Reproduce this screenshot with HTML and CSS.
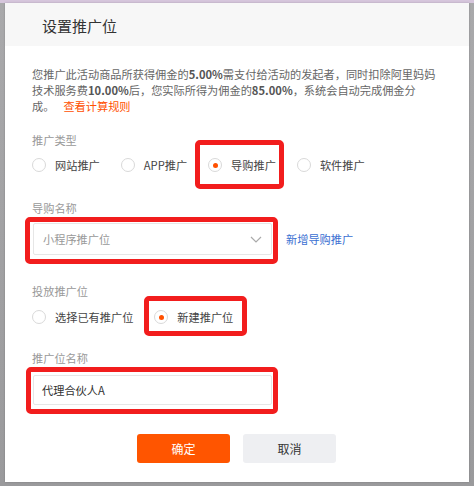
FILE: index.html
```
<!DOCTYPE html>
<html>
<head>
    <meta charset="utf-8">
    <meta name="viewport" content="width=device-width, initial-scale=1">
    <title>设置推广位</title>
    <link rel="stylesheet" href="styles.css">
</head>
<body>
    <div class="modal">
        <div class="modal-head">设置推广位</div>
        <div class="modal-body">
            <p class="notice">您推广此活动商品所获得佣金的<b>5.00%</b>需支付给活动的发起者，同时扣除阿里妈妈<br>技术服务费<b>10.00%</b>后，您实际所得为佣金的<b>85.00%</b>，系统会自动完成佣金分<br>成。<a class="rule">查看计算规则</a></p>

            <div class="field f-type">
                <div class="label">推广类型</div>
                <div class="radios">
                    <span class="radio"><i></i>网站推广</span>
                    <span class="radio"><i></i>APP推广</span>
                    <span class="radio on mark mark-type"><i></i>导购推广</span>
                    <span class="radio"><i></i>软件推广</span>
                </div>
            </div>

            <div class="field f-name">
                <div class="label">导购名称</div>
                <div class="row">
                    <div class="select mark mark-select">
                        <span>小程序推广位</span>
                        <svg width="12" height="7" viewBox="0 0 12 7"><path d="M1 1l5 5 5-5" fill="none" stroke="#aaa" stroke-width="1.2"/></svg>
                    </div>
                    <a class="add">新增导购推广</a>
                </div>
            </div>

            <div class="field f-place">
                <div class="label">投放推广位</div>
                <div class="radios">
                    <span class="radio"><i></i>选择已有推广位</span>
                    <span class="radio on mark mark-new"><i></i>新建推广位</span>
                </div>
            </div>

            <div class="field f-title">
                <div class="label">推广位名称</div>
                <div class="input mark mark-input">代理合伙人A</div>
            </div>

            <div class="btns">
                <button class="btn ok">确定</button>
                <button class="btn cancel">取消</button>
            </div>
        </div>
    </div>
</body>
</html>
```

FILE: styles.css
```
body{
    margin: 0;
    height: 486px;
    overflow: hidden;
    font-family: "Noto Sans CJK SC", "Noto Sans", sans-serif;
    background: linear-gradient(#d6c6dc 0, #d6c6dc 3px, #a9a9ab 3px, #9a9a9c 100%);
}
.modal{
    margin: 3px 0 0 5px;
    width: 464px;
    height: 479px;
    background: #fff;
    box-shadow: 0 0 2px rgba(0,0,0,0.2);
}
.modal-head{
    height: 43px;
    line-height: 46px;
    padding-left: 37px;
    background: #f7f7f7;
    font-size: 15px;
    color: #333;
}
.modal-body{
    padding-left: 27px;
    font-size: 11.2px;
}
.notice{
    margin: 20px 0 0;
    line-height: 16px;
    color: #666;
    white-space: nowrap;
}
.notice b{
    color: #555;
}
.rule{
    margin-left: 9px;
    color: #ff5000;
}
.label{
    line-height: 16px;
    color: #999;
}
.f-type{ margin-top: 18px; }
.f-name{ margin-top: 23px; }
.f-place{ margin-top: 28px; }
.f-title{ margin-top: 21px; }

.radios{
    display: flex;
    height: 24px;
    align-items: center;
    margin-top: 5px;
}
.f-place .radios{ margin-top: 6px; }
.radio{
    display: flex;
    align-items: center;
    height: 24px;
    margin-right: 21px;
    color: #444;
}
.radio i{
    width: 12px;
    height: 12px;
    border: 1px solid #d9d9d9;
    border-radius: 50%;
    margin-right: 9px;
    position: relative;
}
.radio.on i::after{
    content: "";
    position: absolute;
    left: 3.5px;
    top: 3.5px;
    width: 5px;
    height: 5px;
    border-radius: 50%;
    background: #ff5000;
}

.row{
    display: flex;
    align-items: center;
    margin-top: 7px;
}
.select{
    margin-left: 1px;
    width: 239px;
    height: 32px;
    box-sizing: border-box;
    border: 1px solid #e6e6e6;
    border-radius: 2px;
    display: flex;
    align-items: center;
    justify-content: space-between;
    padding: 0 9px;
    color: #999;
}
.add{
    margin-left: 14px;
    color: #3a6fd2;
}
.input{
    margin: 9px 0 0 1px;
    width: 239px;
    height: 30px;
    box-sizing: border-box;
    border: 1px solid #e6e6e6;
    border-radius: 2px;
    line-height: 28px;
    padding-left: 8px;
    color: #333;
}

/* красные рамки поверх */
.mark{ position: relative; }
.mark::after{
    content: "";
    position: absolute;
    border: 5px solid #f21d1d;
    border-radius: 5px;
}
.mark-type::after{ left: -13px; right: -8px; top: -13px; bottom: -12px; }
.mark-select::after{ left: -9px; right: -7px; top: -7px; bottom: -10px; }
.mark-new::after{ left: -10px; right: -14px; top: -9px; bottom: -7px; }
.mark-input::after{ left: -8px; right: -7px; top: -9px; bottom: -10px; }

.btns{
    display: flex;
    margin: 29px 0 0 105px;
}
.btn{
    width: 93px;
    height: 29px;
    border: 0;
    border-radius: 3px;
    font-family: inherit;
    font-size: 12px;
    margin-right: 13px;
}
.ok{
    background: #ff5500;
    color: #fff;
}
.cancel{
    background: #eeeff2;
    color: #333;
}
```
